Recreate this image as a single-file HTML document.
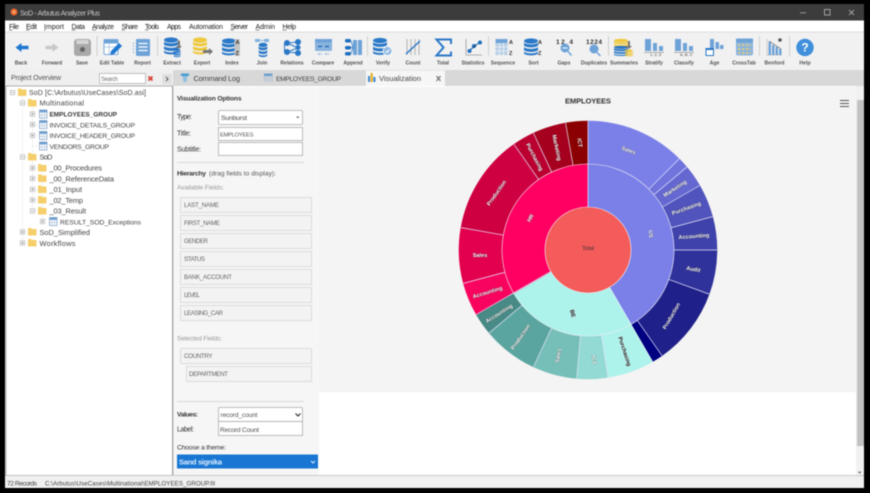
<!DOCTYPE html>
<html><head><meta charset="utf-8"><title>SoD - Arbutus Analyzer Plus</title>
<style>
html,body{margin:0;padding:0;background:#000;width:870px;height:493px;overflow:hidden}
svg{display:block;filter:blur(.45px)}
text{font-family:"Liberation Sans",sans-serif;font-size:7px;fill:#333}
.tb text{font-size:5.2px;font-weight:bold;fill:#555;text-anchor:middle}
.menu text{font-size:7px;fill:#222}
.tree text{font-size:7.4px;fill:#444}
.tree text.u{font-size:6.8px}
.f rect{fill:#f3f3f3;stroke:#dcdcdc;stroke-width:1}
.f text{font-size:6.2px;fill:#666}
.in{fill:#fff;stroke:#aaa;stroke-width:.8}
.lb text{font-size:5.6px;font-weight:bold;text-anchor:middle;fill:#fff;stroke:rgba(0,0,0,.45);stroke-width:.6;paint-order:stroke}
.r circle{fill:none}
.sep line{stroke:#e8e8ff;stroke-width:.7}
</style></head><body>
<svg width="870" height="493" viewBox="0 0 870 493" xmlns="http://www.w3.org/2000/svg">
<defs>
<g id="db"><ellipse cx="0" cy="-6" rx="7" ry="2.6" fill="#2a78c8"/><path d="M-7-4.500c2 2.500 12 2.500 14 0v3c-2 2.500-12 2.500-14 0z" fill="#2a78c8"/><path d="M-7 0c2 2.500 12 2.500 14 0v3c-2 2.500-12 2.500-14 0z" fill="#2a78c8"/><path d="M-7 4.500c2 2.500 12 2.500 14 0v2c-2 2.500-12 2.500-14 0z" fill="#2a78c8"/></g>
<g id="dby"><ellipse cx="0" cy="-6" rx="7" ry="2.6" fill="#eec73a"/><path d="M-7-4.500c2 2.500 12 2.500 14 0v3c-2 2.500-12 2.500-14 0z" fill="#eec73a"/><path d="M-7 0c2 2.500 12 2.500 14 0v3c-2 2.500-12 2.500-14 0z" fill="#eec73a"/><path d="M-7 4.500c2 2.500 12 2.500 14 0v2c-2 2.500-12 2.500-14 0z" fill="#eec73a"/></g>
<g id="bars"><rect x="-9" y="-9" width="6" height="12" fill="#6ea3d8"/><rect x="-1" y="-5" width="4" height="8" fill="#6ea3d8"/><rect x="5" y="-2" width="4" height="5" fill="#6ea3d8"/><rect x="-10" y="4" width="20" height=".8" fill="#999"/></g>
<g id="fold"><path d="M0 1h3l1 1h4.500v6.500H0z" fill="#f5cf6b"/></g>
<g id="tbl"><rect x="0" y="0" width="7.500" height="8" fill="#fff" stroke="#7d9cc0" stroke-width=".7"/><rect x="0" y="0" width="7.500" height="2.400" fill="#6e9fd0"/><path d="M2.500 2.500v5.500M5 2.500v5.500M0 5h7.500" stroke="#9db7d3" stroke-width=".5"/></g>
<g id="pl"><rect x="-2.200" y="-2.200" width="4.400" height="4.400" fill="#fff" stroke="#aaa" stroke-width=".6"/><path d="M-1.300 0h2.600M0-1.300v2.600" stroke="#666" stroke-width=".5"/></g>
<g id="mi"><rect x="-2.200" y="-2.200" width="4.400" height="4.400" fill="#fff" stroke="#aaa" stroke-width=".6"/><path d="M-1.300 0h2.600" stroke="#666" stroke-width=".5"/></g>
</defs>

<!-- window -->
<rect x="5" y="4" width="859" height="484" fill="#f0f0f0"/>
<rect x="5" y="4" width="859" height="16.500" fill="#3c3c3c"/>
<circle cx="14" cy="12" r="3.500" fill="#e8622a"/><circle cx="14" cy="12" r="1.700" fill="#f59a63"/>
<text x="20" y="15.500" textLength="80" style="font-size:7.2px;fill:#c9c9c9">SoD - Arbutus Analyzer Plus</text>
<path d="M800 12.800h6" stroke="#aaa" stroke-width=".8"/><rect x="824.500" y="9.500" width="5.500" height="5.500" fill="none" stroke="#bbb" stroke-width=".8"/><path d="M849 10l5 5M854 10l-5 5" stroke="#bbb" stroke-width=".8"/>

<!-- menu -->
<rect x="5" y="20.500" width="859" height="11" fill="#fff"/>
<rect x="5" y="31.500" width="859" height="1" fill="#ddd"/>
<g class="menu">
<text x="9" y="29" textLength="10">File</text><text x="26" y="29" textLength="11">Edit</text><text x="44" y="29" textLength="20">Import</text><text x="71.500" y="29" textLength="13.500">Data</text><text x="92" y="29" textLength="22">Analyze</text><text x="121.500" y="29" textLength="16.500">Share</text><text x="145" y="29" textLength="14">Tools</text><text x="167" y="29" textLength="14">Apps</text><text x="189" y="29" textLength="34">Automation</text><text x="230.500" y="29" textLength="17.500">Server</text><text x="255.500" y="29" textLength="19.500">Admin</text><text x="282.500" y="29" textLength="13.500">Help</text>
<path d="M9 30h3.500M26 30h3.500M44 30h2M71.500 30h4M92 30h4M121.500 30h3.500M145 30h3.500M230.500 30h3.500M255.500 30h4M282.500 30h4" stroke="#222" stroke-width=".5"/>
</g>

<!-- toolbar -->
<rect x="5" y="32.500" width="859" height="37.500" fill="#f1f1f1"/>
<g stroke="#c8c8c8" stroke-width=".8"><path d="M97 36v20M157.500 36v20M367.500 36v20M488.500 36v20M608.500 36v20M759.500 36v20M789.500 36v20"/></g>
<g class="tb">
<text x="21" y="64.500">Back</text><text x="52" y="64.500">Forward</text><text x="82" y="64.500">Save</text><text x="112" y="64.500">Edit Table</text><text x="142.500" y="64.500">Report</text><text x="172" y="64.500">Extract</text><text x="202" y="64.500">Export</text><text x="232" y="64.500">Index</text><text x="262" y="64.500">Join</text><text x="292" y="64.500">Relations</text><text x="323" y="64.500">Compare</text><text x="353" y="64.500">Append</text><text x="383" y="64.500">Verify</text><text x="413" y="64.500">Count</text><text x="443" y="64.500">Total</text><text x="473" y="64.500">Statistics</text><text x="503" y="64.500">Sequence</text><text x="533.500" y="64.500">Sort</text><text x="564" y="64.500">Gaps</text><text x="594" y="64.500">Duplicates</text><text x="624" y="64.500">Summaries</text><text x="654" y="64.500">Stratify</text><text x="684" y="64.500">Classify</text><text x="714.500" y="64.500">Age</text><text x="744" y="64.500">CrossTab</text><text x="774.500" y="64.500">Benford</text><text x="805" y="64.500">Help</text>
</g>
<!-- back / forward / save -->
<path d="M15.500 47.500l6-4.500v2.800h7v3.400h-7V52z" fill="#1f78d1"/>
<path d="M58.500 47.500l-6-4.500v2.800h-7v3.400h7V52z" fill="#c9c9c9"/>
<rect x="74" y="39" width="17" height="17" rx="3" fill="#a9a9a9"/><rect x="76.500" y="40" width="12" height="4" fill="#d5d5d5"/><circle cx="82.500" cy="49.500" r="2.500" fill="#666"/>
<!-- edit table -->
<rect x="104" y="39.500" width="14" height="15" rx="1" fill="#fff" stroke="#7aa8d8"/><rect x="104" y="39.500" width="14" height="4" fill="#6ea3d8"/><path d="M104 47h14M109 43v11" stroke="#a9c5e3" stroke-width=".8"/><path d="M110 55l1-4 8-8 3 3-8 8z" fill="#1f78d1"/>
<!-- report -->
<rect x="136" y="39" width="14" height="17" rx="1" fill="#6ea3d8"/><path d="M138.500 43.500h9M138.500 47h9M138.500 50.500h9" stroke="#fff" stroke-width="1.200"/><path d="M133.500 42.500v11" stroke="#9fc1e4" stroke-width="1.500" stroke-dasharray="1.500 1.500"/>
<!-- extract -->
<use href="#db" x="171" y="46"/><path d="M178 40v6h-2l3 3 3-3h-2v-5z" fill="#777"/><use href="#db" transform="translate(177 53) scale(.5)"/>
<!-- export -->
<use href="#dby" x="200" y="46"/><path d="M203 50h6v-2l4 3.500-4 3.500v-2h-6z" fill="#777"/>
<!-- index -->
<use href="#db" x="229" y="47"/><rect x="234.500" y="39" width="5.500" height="17" fill="#c5c5c5"/><text x="235.500" y="44" style="font-size:5.500px;font-weight:bold;fill:#333">A</text><text x="235.500" y="55" style="font-size:5.500px;font-weight:bold;fill:#333">Z</text>
<!-- join -->
<path d="M255 39h5v3h-5zM264 39h5v3h-5z" fill="#7fb0de"/><path d="M260.500 40.500h3" stroke="#7fb0de"/><use href="#db" transform="translate(263 50) scale(.62 .85)"/>
<!-- relations -->
<g fill="#2a78c8"><circle cx="287" cy="43" r="3"/><circle cx="287" cy="52" r="3"/><circle cx="298" cy="42" r="3"/><circle cx="298" cy="47.500" r="2.500"/><circle cx="298" cy="53" r="3"/></g><path d="M287 43l11-1M287 43l11 5M287 52l11-4M287 52l11 1M284.500 43v9" stroke="#2a78c8" fill="none"/>
<!-- compare -->
<rect x="315" y="39" width="17" height="12" rx="1" fill="#8ab4de"/><rect x="315" y="39" width="17" height="3.500" fill="#6ea3d8"/><path d="M318 46.500h4M325 46.500h4" stroke="#1f68b5" stroke-width="1.300"/><path d="M318 54h4M325 54h4" stroke="#8ab4de" stroke-width="1.500" stroke-dasharray="2 1"/>
<!-- append -->
<rect x="345" y="39" width="6" height="3.500" rx="1.500" fill="#1f6fbf"/><rect x="345" y="46" width="6" height="3.500" rx="1.500" fill="#1f6fbf"/><rect x="345" y="52" width="6" height="3.500" rx="1.500" fill="#1f6fbf"/><rect x="353" y="40" width="4" height="15" fill="#6ea3d8"/><rect x="358" y="40" width="4" height="15" fill="#6ea3d8"/><path d="M351 41l2 6M351 47.500h2M351 53.500l2-6" stroke="#1f6fbf" stroke-width=".7"/>
<!-- verify -->
<use href="#db" x="380" y="46.500"/><circle cx="387.500" cy="51" r="4.500" fill="#8fb9e2" stroke="#fff" stroke-width=".8"/><path d="M385.500 51l1.500 1.500 2.500-3" stroke="#fff" fill="none"/>
<!-- count -->
<path d="M407 39v16M411 39v16M415 39v16M419 39v16" stroke="#b5b5b5" stroke-width="1.100"/><path d="M406 54l14-13" stroke="#2a78c8" stroke-width="1.500"/>
<!-- total -->
<path d="M451 44v-4.500h-14.500l7 8-7 8h14.500v-4" fill="none" stroke="#2a78c8" stroke-width="2"/>
<!-- statistics -->
<path d="M466 39v16h16" fill="none" stroke="#999" stroke-width=".8"/><circle cx="469.500" cy="51" r="2" fill="#1f6fbf"/><circle cx="474" cy="46" r="2" fill="#1f6fbf"/><circle cx="480" cy="42.500" r="2" fill="#1f6fbf"/><path d="M469.500 51l4.500-5 6-3.500" stroke="#1f6fbf"/>
<!-- sequence -->
<rect x="495.500" y="39" width="12" height="16" fill="#b9cfe6"/><rect x="495.500" y="39" width="12" height="4" fill="#6ea3d8"/><path d="M499.500 43v12M503.500 43v12M495.500 47h12M495.500 51h12" stroke="#fff" stroke-width=".6"/><text x="509" y="44" style="font-size:5.500px;font-weight:bold;fill:#333">A</text><text x="509" y="55" style="font-size:5.500px;font-weight:bold;fill:#333">Z</text>
<!-- sort -->
<use href="#db" x="531" y="47"/><text x="538" y="44" style="font-size:5.500px;font-weight:bold;fill:#333">A</text><text x="538" y="55" style="font-size:5.500px;font-weight:bold;fill:#333">Z</text>
<!-- gaps -->
<text x="556" y="44" textLength="17" style="font-size:6.500px;font-weight:bold;fill:#333">12  4</text><circle cx="565" cy="48" r="4.500" fill="#6ea3d8"/><path d="M562.500 48h5" stroke="#fff"/><path d="M568 51.500l3.500 4" stroke="#6ea3d8" stroke-width="1.500"/>
<!-- duplicates -->
<text x="586" y="44" textLength="16" style="font-size:6.500px;font-weight:bold;fill:#333">1224</text><circle cx="594" cy="49" r="4.500" fill="#6ea3d8"/><path d="M597 52.500l3.500 3.500" stroke="#6ea3d8" stroke-width="1.500"/>
<!-- summaries -->
<use href="#dby" transform="translate(621 44) scale(1 .6)"/><use href="#db" transform="translate(621 51) scale(1 .6)"/><path d="M628 41v5h-2l3 3 3-3h-2v-5z" fill="#777"/><use href="#dby" transform="translate(629 53) scale(.55 .4)"/>
<!-- stratify / classify -->
<use href="#bars" x="654" y="48"/><text x="650" y="56" style="font-size:4px;fill:#444">1..2..3</text>
<use href="#bars" x="684" y="48"/><text x="680" y="56" style="font-size:4px;fill:#444">A..B..C</text>
<!-- age -->
<rect x="710" y="39" width="4" height="10" fill="#6ea3d8"/><rect x="715.500" y="42" width="3.500" height="7" fill="#6ea3d8"/><rect x="720" y="45" width="3.500" height="4" fill="#6ea3d8"/><rect x="706" y="48.500" width="7.500" height="7" fill="#fff" stroke="#2a78c8"/><rect x="706" y="48" width="7.500" height="2" fill="#2a78c8"/>
<!-- crosstab -->
<rect x="736" y="38.500" width="17" height="17" rx="2" fill="#8ab4de"/><rect x="736" y="38.500" width="17" height="4" fill="#6ea3d8"/><path d="M738 45h13M738 49h13M738 53h13" stroke="#d9c98a" stroke-width="2" stroke-dasharray="2.500 1.500"/>
<!-- benford -->
<path d="M767 39v16h15" fill="none" stroke="#bbb" stroke-width=".7"/><rect x="768.500" y="42" width="2.500" height="13" fill="#6ea3d8"/><rect x="772" y="45" width="2.500" height="10" fill="#6ea3d8"/><rect x="775.500" y="47" width="2.500" height="8" fill="#6ea3d8"/><rect x="779" y="49" width="2.500" height="6" fill="#6ea3d8"/><path d="M769 41l12 8" stroke="#555" stroke-width=".6"/><circle cx="780" cy="40" r="1.800" fill="#555"/>
<!-- help -->
<circle cx="805" cy="47.500" r="8.700" fill="#3f8fdc"/><text x="805" y="51.500" text-anchor="middle" style="font-size:12px;font-weight:bold;fill:#fff">?</text>

<!-- left panel -->
<rect x="5" y="70" width="168" height="16" fill="#efefef"/>
<text x="11" y="80" textLength="50" style="font-size:7px;fill:#555">Project Overview</text>
<rect x="99.500" y="73.500" width="46" height="10" fill="#fff" stroke="#aaa" stroke-width=".7"/><text x="101" y="81" textLength="17" style="font-size:6px;fill:#777">Search</text>
<rect x="147" y="75" width="7" height="7" fill="#eee"/><path d="M148.500 76.500l4 4M152.500 76.500l-4 4" stroke="#d83a2e" stroke-width="1.600"/>
<rect x="162.500" y="74" width="9" height="10" fill="#dedede"/><path d="M166 77l2 2-2 2" fill="none" stroke="#333" stroke-width=".8"/>
<rect x="6" y="86" width="166.500" height="389.500" fill="#fff" stroke="#9c9c9c" stroke-width=".8"/>
<!-- tree -->
<g stroke="#ccc" stroke-width=".5" stroke-dasharray="1 1" fill="none">
<path d="M22.500 95v148M32.500 105v106M42.500 116v30M42.500 170v52M22.500 103h5M22.500 157h5M22.500 232h5M22.500 243h5M32.500 114h6M32.500 125h6M32.500 135.500h6M32.500 146h6M32.500 168h6M32.500 178.500h6M32.500 189.500h6M32.500 200h6M32.500 211h6"/>
</g>
<g>
<use href="#mi" x="12.500" y="92.500"/><use href="#fold" x="18" y="87.500"/>
<use href="#mi" x="22.500" y="103"/><use href="#fold" x="28" y="98"/>
<use href="#pl" x="32.500" y="114"/><use href="#tbl" x="39.500" y="110"/>
<use href="#pl" x="32.500" y="124.500"/><use href="#tbl" x="39.500" y="120.500"/>
<use href="#pl" x="32.500" y="135.500"/><use href="#tbl" x="39.500" y="131.500"/>
<use href="#tbl" x="39.500" y="142"/>
<use href="#mi" x="22.500" y="157"/><use href="#fold" x="28" y="152"/>
<use href="#pl" x="32.500" y="168"/><use href="#fold" x="38" y="163"/>
<use href="#pl" x="32.500" y="178.500"/><use href="#fold" x="38" y="173.500"/>
<use href="#pl" x="32.500" y="189.500"/><use href="#fold" x="38" y="184.500"/>
<use href="#pl" x="32.500" y="200"/><use href="#fold" x="38" y="195"/>
<use href="#mi" x="32.500" y="211"/><use href="#fold" x="38" y="206"/>
<use href="#pl" x="42.500" y="221.500"/><use href="#tbl" x="49.500" y="217.500"/>
<use href="#pl" x="22.500" y="232"/><use href="#fold" x="28" y="227"/>
<use href="#pl" x="22.500" y="243"/><use href="#fold" x="28" y="238"/>
</g>
<g class="tree">
<text x="29" y="95.200" textLength="117" style="font-size:7px">SoD [C:\Arbutus\UseCases\SoD.asi]</text>
<text x="39.500" y="105.700" textLength="44.500">Multinational</text>
<text x="49.500" y="116.700" textLength="67.500" class="u" style="font-weight:bold;fill:#333;font-size:6.400px">EMPLOYEES_GROUP</text>
<text x="49.500" y="127.300" textLength="85.500" class="u">INVOICE_DETAILS_GROUP</text>
<text x="49.500" y="138.200" textLength="85.500" class="u">INVOICE_HEADER_GROUP</text>
<text x="49.500" y="148.800" textLength="59.500" class="u">VENDORS_GROUP</text>
<text x="39.500" y="159.700" textLength="13">SoD</text>
<text x="49.500" y="170.700" textLength="52.500">_00_Procedures</text>
<text x="49.500" y="181.300" textLength="64.500">_00_ReferenceData</text>
<text x="49.500" y="192.200" textLength="32.500">_01_Input</text>
<text x="49.500" y="202.800" textLength="33.500">_02_Temp</text>
<text x="49.500" y="213.700" textLength="36.500">_03_Result</text>
<text x="60" y="224.300" textLength="81" class="u">RESULT_SOD_Exceptions</text>
<text x="39.500" y="234.800" textLength="50.500">SoD_Simplified</text>
<text x="39.500" y="245.800" textLength="36">Workflows</text>
</g>

<!-- tabs -->
<rect x="173" y="70" width="691" height="16" fill="#d8d8d8"/>
<rect x="181" y="73.500" width="8" height="2.500" fill="#4a9bd0"/><path d="M182.500 76h5l-1 6h-3z" fill="#8fc0e0"/>
<text x="193.500" y="81" textLength="46.500" style="font-size:7.500px;fill:#444">Command Log</text>
<rect x="264" y="73.500" width="8.500" height="2.500" fill="#6e9fd0"/><path d="M264.500 76v6M267 76v6M269.500 76v6M272 76v6" stroke="#9db7d3" stroke-width=".8"/>
<text x="276" y="81" textLength="65" style="font-size:6.800px;fill:#444">EMPLOYEES_GROUP</text>
<rect x="366" y="70.500" width="79" height="16" fill="#f6f6f6"/>
<rect x="368" y="76" width="2" height="6" fill="#3f88cf"/><rect x="370.500" y="73" width="2.300" height="9" fill="#e6b22f"/><rect x="373.300" y="77" width="2.200" height="5" fill="#3f88cf"/>
<text x="379" y="81" textLength="42" style="font-size:7.500px;fill:#444">Visualization</text>
<path d="M436.500 76l4 5M440.500 76l-4 5" stroke="#777" stroke-width="1.300"/>

<!-- content -->
<rect x="173" y="86" width="683" height="390" fill="#fff"/>
<rect x="173" y="87" width="683" height="305" fill="#f4f4f4"/>
<rect x="173" y="87" width="146" height="389" fill="#f6f6f6"/>
<rect x="172.300" y="86" width="1" height="389" fill="#9c9c9c"/>

<!-- options -->
<text x="177" y="100.500" textLength="64.500" style="font-weight:bold;fill:#333;font-size:6.600px">Visualization Options</text>
<text x="177" y="119" textLength="15" style="font-size:7px">Type:</text>
<rect x="218.500" y="110.500" width="84" height="14" rx="1" class="in"/><text x="221" y="120" textLength="26" style="font-size:6.800px;fill:#444">Sunburst</text><path d="M296 116.500l1.800 2 1.800-2z" fill="#777"/>
<text x="177" y="135.500" textLength="14" style="font-size:7px">Title:</text>
<rect x="218.500" y="127.500" width="84" height="13" class="in"/><text x="220" y="136.500" textLength="33.500" style="font-size:5.800px;fill:#555">EMPLOYEES</text>
<text x="177" y="151.500" textLength="24" style="font-size:7px">Subtitle:</text>
<rect x="218.500" y="142.500" width="84" height="13" class="in"/>
<path d="M177 162.500h127" stroke="#ccc" stroke-width=".7"/>
<text x="177" y="175.500" style="font-size:6.800px;font-weight:bold;fill:#333" textLength="29">Hierarchy</text>
<text x="209" y="175.500" textLength="67" style="font-size:6.600px;fill:#555">(drag fields to display):</text>
<text x="177" y="189.500" textLength="47" style="font-size:6.600px;fill:#999">Available Fields:</text>
<g class="f">
<rect x="180.500" y="197.500" width="131" height="15"/><text x="184" y="207" textLength="35">LAST_NAME</text>
<rect x="180.500" y="215.500" width="131" height="15"/><text x="184" y="225" textLength="36">FIRST_NAME</text>
<rect x="180.500" y="233.500" width="131" height="15"/><text x="184" y="243" textLength="24">GENDER</text>
<rect x="180.500" y="251.500" width="131" height="15"/><text x="184" y="261" textLength="21">STATUS</text>
<rect x="180.500" y="269.500" width="131" height="15"/><text x="184" y="279" textLength="48">BANK_ACCOUNT</text>
<rect x="180.500" y="287.500" width="131" height="15"/><text x="184" y="297" textLength="16">LEVEL</text>
<rect x="180.500" y="305.500" width="131" height="15"/><text x="184" y="315" textLength="39">LEASING_CAR</text>
<rect x="180.500" y="348.500" width="131" height="15"/><text x="184" y="358" textLength="28.500">COUNTRY</text>
<rect x="186.500" y="366.500" width="125" height="15"/><text x="189" y="376" textLength="39">DEPARTMENT</text>
</g>
<text x="177" y="340.500" textLength="45" style="font-size:6.600px;fill:#999">Selected Fields:</text>
<path d="M177 401.500h127" stroke="#ccc" stroke-width=".7"/>
<text x="177" y="416.500" textLength="21" style="font-size:6.600px;font-weight:bold;fill:#333">Values:</text>
<rect x="218.500" y="407.500" width="84" height="14" rx="1" class="in"/><text x="220.500" y="417" textLength="37" style="font-size:6.600px;fill:#555">record_count</text><path d="M295.500 413.500l2.500 2.500 2.500-2.500" fill="none" stroke="#222" stroke-width="1.100"/>
<text x="177" y="431.500" textLength="17" style="font-size:7px">Label:</text>
<rect x="218.500" y="421.500" width="84" height="14" class="in"/><text x="220" y="432" textLength="39" style="font-size:6.800px;fill:#555">Record Count</text>
<text x="177" y="449.500" textLength="49" style="font-size:6.800px">Choose a theme:</text>
<rect x="177" y="454.500" width="141" height="14" fill="#1976d2"/><text x="179" y="464.500" textLength="43" style="font-size:7.500px;font-weight:bold;fill:#dcecff">Sand signika</text><path d="M311 461l2 2 2-2" fill="none" stroke="#dcecff"/>

<!-- chart -->
<text x="565" y="103.500" textLength="46" style="font-size:7.600px;font-weight:bold;fill:#333">EMPLOYEES</text>
<path d="M840 100.500h9M840 103.500h9M840 106.500h9" stroke="#555" stroke-width="1.100"/>
<g transform="translate(588 250)">
<g class="r" stroke-width="43.500">
<circle r="107.500" pathLength="360" stroke="#7b80e8" stroke-dasharray="45 315" transform="rotate(-90)"/>
<circle r="107.500" pathLength="360" stroke="#7074dc" stroke-dasharray="5 355" transform="rotate(-45)"/>
<circle r="107.500" pathLength="360" stroke="#6468d0" stroke-dasharray="10 350" transform="rotate(-40)"/>
<circle r="107.500" pathLength="360" stroke="#5054bc" stroke-dasharray="15 345" transform="rotate(-30)"/>
<circle r="107.500" pathLength="360" stroke="#3f42ab" stroke-dasharray="15 345" transform="rotate(-15)"/>
<circle r="107.500" pathLength="360" stroke="#30329b" stroke-dasharray="20 340" transform="rotate(0)"/>
<circle r="107.500" pathLength="360" stroke="#20208a" stroke-dasharray="35 325" transform="rotate(20)"/>
<circle r="107.500" pathLength="360" stroke="#000080" stroke-dasharray="5 355" transform="rotate(55)"/>
<circle r="107.500" pathLength="360" stroke="#aef2ec" stroke-dasharray="21 339" transform="rotate(60)"/>
<circle r="107.500" pathLength="360" stroke="#93dad4" stroke-dasharray="14 346" transform="rotate(81)"/>
<circle r="107.500" pathLength="360" stroke="#76bfb9" stroke-dasharray="20 340" transform="rotate(95)"/>
<circle r="107.500" pathLength="360" stroke="#5ba5a0" stroke-dasharray="25 335" transform="rotate(115)"/>
<circle r="107.500" pathLength="360" stroke="#478a86" stroke-dasharray="10 350" transform="rotate(140)"/>
<circle r="107.500" pathLength="360" stroke="#f8045f" stroke-dasharray="15 345" transform="rotate(150)"/>
<circle r="107.500" pathLength="360" stroke="#e3004e" stroke-dasharray="25 335" transform="rotate(165)"/>
<circle r="107.500" pathLength="360" stroke="#cf0042" stroke-dasharray="45 315" transform="rotate(190)"/>
<circle r="107.500" pathLength="360" stroke="#bb0030" stroke-dasharray="10 350" transform="rotate(235)"/>
<circle r="107.500" pathLength="360" stroke="#a6001f" stroke-dasharray="15 345" transform="rotate(245)"/>
<circle r="107.500" pathLength="360" stroke="#8b0000" stroke-dasharray="10 350" transform="rotate(260)"/>
<circle r="64.500" pathLength="360" stroke="#7b80e8" stroke-dasharray="150 210" transform="rotate(-90)"/>
<circle r="64.500" pathLength="360" stroke="#aef2ec" stroke-dasharray="90 270" transform="rotate(60)"/>
<circle r="64.500" pathLength="360" stroke="#ff0062" stroke-dasharray="120 240" transform="rotate(150)"/>
</g>
<circle r="43" fill="#f45b5b" stroke="#f4f4f4" stroke-width=".6"/>
<circle r="86" fill="none" stroke="#eee" stroke-width=".6"/>
<g class="sep">
<line y1="-86" y2="-129" transform="rotate(45)"/><line y1="-86" y2="-129" transform="rotate(50)"/><line y1="-86" y2="-129" transform="rotate(60)"/><line y1="-86" y2="-129" transform="rotate(75)"/><line y1="-86" y2="-129" transform="rotate(90)"/><line y1="-86" y2="-129" transform="rotate(110)"/><line y1="-86" y2="-129" transform="rotate(145)"/><line y1="-43" y2="-129" transform="rotate(150)" style="stroke:#e8f4f4"/><line y1="-86" y2="-129" transform="rotate(171)"/><line y1="-86" y2="-129" transform="rotate(185)"/><line y1="-86" y2="-129" transform="rotate(205)"/><line y1="-86" y2="-129" transform="rotate(230)"/><line y1="-43" y2="-129" transform="rotate(240)"/><line y1="-86" y2="-129" transform="rotate(255)"/><line y1="-86" y2="-129" transform="rotate(280)"/><line y1="-86" y2="-129" transform="rotate(325)"/><line y1="-86" y2="-129" transform="rotate(335)"/><line y1="-86" y2="-129" transform="rotate(350)"/><line y1="-43" y2="-129"/>
</g>
</g>
<g class="lb">
<text transform="translate(628 152) rotate(20)">Sales</text>
<text transform="translate(676 190) rotate(-33)">Marketing</text>
<text transform="translate(687 210) rotate(-20)">Purchasing</text>
<text transform="translate(694 238) rotate(-4)">Accounting</text>
<text transform="translate(693 271) rotate(10)">Audit</text>
<text transform="translate(673 317) rotate(-60)">Production</text>
<text transform="translate(649 234) rotate(88)">US</text>
<text transform="translate(498 194) rotate(-55)">Production</text>
<text transform="translate(533 158) rotate(62)">Purchasing</text>
<text transform="translate(555 148) rotate(78)">Marketing</text>
<text transform="translate(578 143) rotate(82)">ICT</text>
<text transform="translate(532 219) rotate(-60)">HR</text>
<text transform="translate(480 257)">Sales</text>
<text transform="translate(488 294) rotate(-17)">Accounting</text>
<text transform="translate(500 315) rotate(-32)">Accounting</text>
<text transform="translate(522 338) rotate(-55)">Production</text>
<text transform="translate(560 356) rotate(-78)">Sales</text>
<text transform="translate(592 360) rotate(85)">ICT</text>
<text transform="translate(623 352) rotate(72)" style="fill:#111;stroke:rgba(255,255,255,.6)">Purchasing</text>
<text transform="translate(571 314) rotate(75)" style="fill:#111;stroke:rgba(255,255,255,.6)">BE</text>
<text transform="translate(588 250)" style="fill:#333;stroke:none;font-weight:normal">Total</text>
</g>

<!-- scrollbar -->
<rect x="856" y="87" width="8" height="389" fill="#f1f1f1"/>
<rect x="857" y="100" width="7" height="346" fill="#c2c2c2"/>
<path d="M858.500 473l1.800-1.800h-3.600z" fill="#555" transform="translate(1.200 .5)"/>

<!-- status bar -->
<rect x="5" y="475.500" width="859" height="12.500" fill="#f0f0f0"/>
<path d="M5 475.500h859" stroke="#bdbdbd" stroke-width=".7"/>
<text x="7" y="485.500" textLength="30" style="font-size:6.800px;fill:#444">72 Records</text>
<text x="45" y="485.500" textLength="170" style="font-size:6.200px;fill:#444">C:\Arbutus\UseCases\Multinational\EMPLOYEES_GROUP.fil</text>
</svg>
</body></html>
